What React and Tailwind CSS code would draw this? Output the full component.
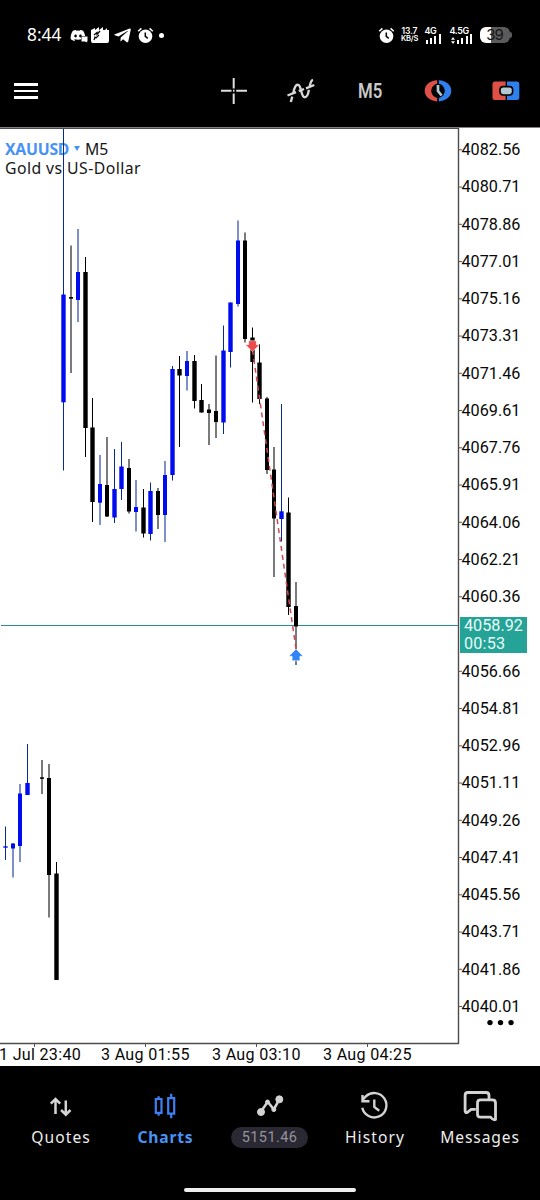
import React from 'react';
import { FaDiscord, FaTelegramPlane } from 'react-icons/fa';

// index, high, body top, body bottom, low, rising
const candles = [
  [0, 826.5, 846.3, 847.7, 860, 1], [1, 843, 843.5, 848.5, 877.5, 1], [2, 784, 793.5, 846, 862, 1], [3, 744, 783, 795, 795, 1],
  [5, 760, 777.3, 778.8, 794, 0], [6, 764, 778, 875, 917.5, 0], [7, 862, 873.5, 980, 980, 0],
  [8, 129, 294.5, 402.3, 470.5, 1], [9, 245.5, 297, 298.7, 373, 0], [10, 229, 272, 300, 322, 1],
  [11, 257, 272, 428, 457, 0], [12, 398, 427.5, 502, 522, 0], [13, 455, 484, 502.7, 525, 1],
  [14, 437, 485, 516.5, 517, 0], [15, 449, 489, 517.5, 523, 1], [16, 442, 466.5, 489, 500, 1],
  [17, 459, 468, 511.5, 513.5, 0], [18, 480, 507, 512, 531.5, 1], [19, 489, 507.5, 533.5, 537.5, 0],
  [20, 482.5, 491, 534, 540.5, 1], [21, 488, 491, 515, 529, 0], [22, 461, 475, 515, 542, 1],
  [23, 366, 369, 475, 480.5, 1], [24, 356, 369, 375.5, 447, 0], [25, 351, 361, 376, 390.5, 1],
  [26, 355, 361, 401, 408.5, 0], [27, 384, 400, 412.5, 412.5, 0], [28, 404, 409.5, 413, 445, 0],
  [29, 355.5, 411, 422, 438, 0], [30, 325.5, 350.5, 422.5, 434, 1], [31, 302.5, 302.5, 352, 367.5, 1],
  [32, 220.5, 240.5, 304, 306.5, 1], [33, 232.5, 240.5, 339, 342.5, 0], [34, 327.5, 337.5, 362, 402.5, 0],
  [35, 344, 362.5, 399, 404, 0], [36, 397, 398.5, 470, 474, 0], [37, 447, 469.5, 518.5, 577, 0],
  [38, 404, 511.3, 519, 541.5, 1], [39, 497.5, 512.5, 607, 615, 0], [40, 582, 606, 626.5, 665, 0],
];

const prices = [
  '4082.56', '4080.71', '4078.86', '4077.01', '4075.16', '4073.31', '4071.46', '4069.61', '4067.76', '4065.91', '4064.06', '4062.21',
  '4060.36', '', '4056.66', '4054.81', '4052.96', '4051.11', '4049.26', '4047.41', '4045.56', '4043.71', '4041.86', '4040.01',
];

// candles whose wick straddles two pixel columns
const soft = [1, 2, 5, 6, 9, 10, 13, 14, 17, 18, 21, 22, 25, 28, 29, 32, 33, 36, 37, 40];

function Candle({ data }) {
  const [i, high, top, bottom, low, up] = data;
  const x = 5.6 + i * 7.262;
  const split = soft.includes(i);
  const cx = split ? Math.round(x) : Math.floor(x) + 0.5;
  const half = split ? 2 : 2.2;
  return (
    <g>
      <rect x={split ? cx - 1 : cx - 0.5} y={high} width={split ? 2 : 1} height={low - high}
        fill={up ? '#082a8f' : '#000'} opacity={split ? 0.52 : 1} />
      <rect x={cx - half} y={top} width={half * 2} height={bottom - top} fill={up ? '#000cf0' : '#000'} />
    </g>
  );
}

function Alarm() {
  return (
    <svg className="h-[17px] w-[17px]" viewBox="0 0 17 17" fill="none">
      <circle cx="8.5" cy="9.3" r="6.8" fill="#fff" />
      <path d="M1.2 4.3 4.4 1.4M15.8 4.3l-3.2-2.9" stroke="#fff" strokeWidth="1.5" />
      <path d="M8.3 5.6v3.8l2.5 1.9" stroke="#000" strokeWidth="1.5" />
    </svg>
  );
}

function Bars({ label, arrows }) {
  return (
    <div className="flex flex-col items-start">
      <span className="h-[9px] text-[9px] leading-[8px] font-semibold tracking-[-0.4px] whitespace-nowrap">{label}</span>
      <div className="-mt-[2px] flex h-[10px] items-end gap-[2.4px] pl-px">
        {arrows && <svg className="h-[7px] w-1" viewBox="0 0 4 7"><path d="m2 0 2 2.7H0ZM2 7 0 4.3h4Z" fill="#fff" /></svg>}
        <i className="h-1 w-[2px] bg-white" /><i className="h-[6px] w-[2px] bg-white" />
        <i className="h-2 w-[2px] bg-white" /><i className="h-[10px] w-[2px] bg-white" />
      </div>
    </div>
  );
}

function StatusBar() {
  return (
    <div className="flex h-[70px] items-center pl-[27px] font-[Inter,sans-serif] text-white">
      <span className="w-[43px] font-['Noto_Sans',sans-serif] text-[17.3px] leading-5">8:44</span>
      <FaDiscord className="h-[17px] w-[16px]" />
      <svg className="-ml-[5px] mt-[9px] h-[7px] w-[7px]" viewBox="0 0 7 7"><path d="M0 0h7v5l-1 2-2-1H0Z" fill="#fff" stroke="#000" /></svg>
      <svg className="ml-[3px] h-[16px] w-[18px]" viewBox="0 0 18 16">
        <path d="M0 3l4-2v2l4-3v3l4-3v3h2l2-2v2h2v11q0 2-2 2H2q-2 0-2-2Z" fill="#fff" />
        <path d="m3 8 3-2.5v2L9 4M3 13l1-3 1 1 3-3" fill="none" stroke="#000" strokeWidth="1.2" />
      </svg>
      <FaTelegramPlane className="ml-[5px] h-[19px] w-[17px]" />
      <span className="ml-[6px]"><Alarm /></span>
      <i className="ml-[5px] h-[5px] w-[5px] rounded-full bg-white" />
      <div className="ml-[213.5px]"><Alarm /></div>
      <div className="ml-[5px] w-5 text-center text-[8.5px] leading-[8.5px] font-semibold whitespace-nowrap">
        <div className="tracking-[-0.1px]">13.7</div><div className="text-[7.5px] tracking-[-0.2px]">KB/S</div>
      </div>
      <div className="ml-[5px] w-[20px]"><Bars label="4G" /></div>
      <div className="ml-[5px] w-[21px]"><Bars label="4.5G" arrows /></div>
      <div className="ml-[9px] flex items-center">
        <div className="flex h-4 w-[30px] items-center justify-center rounded-[6px] bg-linear-to-r from-white from-38% to-[#5b5b5b] to-38% text-[15px] leading-4 tracking-[-1px] text-[#151515]">39</div>
        <i className="h-[6px] w-[2px] rounded-r bg-[#5b5b5b]" />
      </div>
    </div>
  );
}

function Toolbar() {
  return (
    <div className="flex h-[57px] items-start pt-[5px] pl-[14px]">
      <div className="flex h-8 w-6 flex-col justify-center gap-[4px]">
        <i className="h-[2.5px] bg-white" /><i className="h-[2.5px] bg-white" /><i className="h-[2.5px] bg-white" />
      </div>
      <svg className="ml-[182px] h-8 w-7" viewBox="0 0 28 32" fill="none" stroke="#dedede" strokeWidth="2">
        <path d="M13.7 3v10.5M13.7 18.5V29M1 15.8h10.5M16.2 15.8H27M13 15.8h1.5" />
      </svg>
      <svg className="ml-[39px] h-8 w-7" viewBox="0 0 28 32" fill="none" stroke="#d8d8d8" strokeWidth="2.4">
        <path d="M.5 20.5 9 17.2M11.8 16.1 17 14M19 13.3 27.3 10" />
        <path d="M3.8 27 5.3 21.7M6.2 18.4C7.2 13 8.6 9.8 10.6 9.8c4.6 0 2.6 12.4 7.3 12.4 2.6 0 3.4-3.8 4-7.3M22.8 11.3C23.4 7.4 24.3 5.3 26 4.8" />
      </svg>
      <span className="ml-[42.5px] w-[25.5px]">
        <span className="block origin-left scale-x-[.86] font-[Roboto,sans-serif] text-[19.5px] leading-[33px] font-semibold text-[#c9c9c9]">M5</span>
      </span>
      <svg className="ml-[40.5px] h-8 w-7" viewBox="0 0 28 32" fill="none">
        <path d="M13.2 5.2v3.5a7.2 7.2 0 0 0 0 14.2v3.5C5.8 25.8.7 21.5.7 15.8S5.8 5.7 13.2 5.2Z" fill="#df5147" />
        <path d="M14.8 5.2v3.5a7.2 7.2 0 0 1 0 14.2v3.5c7.4-.6 12.5-4.9 12.5-10.6S22.2 5.7 14.8 5.2Z" fill="#2f80ed" />
        <path d="M14 10v6l3.6 4.5" stroke="#b4c8d2" strokeWidth="2.7" />
      </svg>
      <svg className="ml-[40px] h-8 w-7" viewBox="0 0 28 32">
        <path d="M.5 9q0-2.5 2.5-2.5h10.8V25H3Q.5 25 .5 22.5Z" fill="#df5147" />
        <path d="M14.8 6.5h10q2.5 0 2.5 2.5v13.5q0 2.5-2.5 2.5h-10Z" fill="#2f80ed" />
        <path d="M14.3 6v20" stroke="#000" />
        <rect x="8" y="11.6" width="12.6" height="8.4" rx="3.2" fill="#b4c8d2" stroke="#000" strokeWidth="1.6" />
      </svg>
    </div>
  );
}

function Chart() {
  return (
    <main className="relative flex h-[939px] flex-col overflow-hidden bg-white">
      <div className="flex h-[917px]">
        <div className="w-[459px] pt-[12px] pl-[5px] font-['Noto_Sans',sans-serif] text-[15.8px] leading-[20px] text-[#161616]">
          <div className="flex h-[19.4px] items-center">
            <span className="w-[64px] font-bold tracking-[-0.25px] text-[#4793f5]">XAUUSD</span>
            <svg className="ml-[5px] h-[5px] w-[6px]" viewBox="0 0 6 5"><path d="M0 0h6L3 5Z" fill="#4793f5" /></svg>
            <span className="ml-[5px]">M5</span>
          </div>
          <div className="text-[15.8px] tracking-[0.43px] whitespace-nowrap">Gold vs US-Dollar</div>
        </div>
        <div className="relative pt-[4.5px] pl-[2.5px] font-[Roboto,sans-serif] text-[16.2px] text-[#080808]">
          {prices.map((p, i) => <div key={i} className="flex h-[37.26px] items-center leading-5">{p}</div>)}
          <div className="absolute top-[490px] left-px flex h-[36px] w-[67px] flex-col bg-[#24a396] pl-[4px] text-[16.2px] leading-[18px] text-[#e9fbf9]">
            <span>4058.92</span><span className="tracking-[0.2px]">00:53</span>
          </div>
        </div>
      </div>
      <div className="flex h-[22px] font-[Roboto,sans-serif] text-[16.1px] leading-[21px] tracking-[0.3px] whitespace-nowrap text-[#080808]">
        <span className="-ml-[1px] w-[102px]">1 Jul 23:40</span><span className="w-[111px]">3 Aug 01:55</span>
        <span className="w-[111px]">3 Aug 03:10</span><span>3 Aug 04:25</span>
      </div>
      <svg className="absolute inset-0 h-[939px] w-[540px]" viewBox="0 127 540 939">
        <path d="M0 127.5h540" stroke="#867f82" />
        <path d="M0 128.5h459" stroke="#4b494a" />
        <path d="M458.5 128v916M0 1043.5h459" stroke="#4d4d4d" strokeWidth="1.4" />
        {prices.map((p, i) => p && <path key={i} d={`M459 ${149.8 + i * 37.25}h3`} stroke="#555" />)}
        {[34.5, 145.5, 256.5, 367.5].map((x) => <path key={x} d={`M${x} 1044v3`} stroke="#555" />)}
        <rect x="1" y="625" width="457" height="1" fill="#2a8f8d" />
        {candles.map((c) => <Candle key={c[0]} data={c} />)}
        <path d="M252.5 350 296 649" fill="none" stroke="#cd4a50" strokeWidth="1.5" strokeDasharray="5 4" />
        <path d="M248.7 340.7h7.6v4h3.2l-7 7-7-7h3.2Z" fill="#ec4b4b" stroke="#fff" strokeWidth=".5" />
        <path d="m296 649 7.2 7.3h-3.3v4.5h-7.8v-4.5h-3.3Z" fill="#3185f6" stroke="#fff" strokeWidth=".6" />
        <g fill="#000"><circle cx="490" cy="1022.6" r="2.7" /><circle cx="500.5" cy="1022.6" r="2.7" /><circle cx="511" cy="1022.6" r="2.7" /></g>
      </svg>
    </main>
  );
}

function Navigation() {
  return (
    <nav className="h-[134px] bg-black font-['Noto_Sans',sans-serif] text-[15.6px] leading-5 tracking-[1.1px] text-[#eee]">
      <div className="flex h-[118px] pt-[21px] pl-[8px]">
        <div className="flex w-[105px] flex-col items-center gap-[3px]">
          <svg className="h-[37px] w-9" viewBox="0 0 36 37" fill="none" stroke="#d5d5d5" strokeWidth="2.5">
            <path d="M12.5 27V12M7.8 16.7l4.7-4.7 4.7 4.7M22.8 13.5v14M18.1 23l4.7 4.7 4.7-4.7" />
          </svg>
          <span className="-mr-px">Quotes</span>
        </div>
        <div className="flex w-[104px] flex-col items-center gap-[3px] text-[#4793f5]">
          <svg className="h-[37px] w-9" viewBox="0 0 36 37" fill="none" stroke="#3e7ff5" strokeWidth="2.2">
            <path d="M8.8 12h5.7v13.8H8.8ZM11.6 9.2V12M11.6 25.8v3M21.2 11.2h6v15.5h-6ZM24.2 6.7v4.5M24.2 26.7v4.5" />
          </svg>
          <span className="-mr-px font-bold tracking-[0.8px]">Charts</span>
        </div>
        <div className="flex w-[105px] flex-col items-center gap-[3px]">
          <svg className="h-[37px] w-9" viewBox="0 0 36 37" stroke="#d3d3d3" fill="#d3d3d3">
            <path d="m9 24.5 6.7-9.7 6.1 7.6 5.5-10" strokeWidth="2.6" fill="none" />
            <circle cx="9" cy="25" r="3.5" /><circle cx="15.5" cy="15" r="2" /><circle cx="21.8" cy="22.6" r="2" /><circle cx="27.3" cy="12.3" r="3.5" />
          </svg>
          <span className="h-[21px] w-[77px] rounded-full bg-[#292833] text-center font-[Roboto,sans-serif] text-[14.5px] leading-[21px] tracking-[0.4px] text-[#95939b]">5151.46</span>
        </div>
        <div className="flex w-[105px] flex-col items-center gap-[3px]">
          <svg className="h-[37px] w-9" viewBox="0 0 36 37" fill="none" stroke="#d3d3d3" strokeWidth="2.4">
            <path d="M5.3 20.8A12.2 12.2 0 1 0 8.8 9.4L5.5 13M5.5 8v6.2h7M17.3 12.5V20l4.9 3.7" />
          </svg>
          <span className="-mr-px">History</span>
        </div>
        <div className="flex w-[105px] flex-col items-center gap-[3px]">
          <svg className="h-[37px] w-9" viewBox="0 0 36 37" fill="none" stroke="#d3d3d3" strokeWidth="2.8">
            <path d="M5.7 5.5H24q3 0 3 3V12M13.8 22.4H9.2l-3.8 3q-2.3 1-2.3-1.8V8.5q0-3 2.6-3M18.5 12.8h12q3 0 3 3v16.7q-1.8 1.4-5-2.3h-10q-3 0-3-3V15.8q0-3 3-3Z" />
          </svg>
          <span className="-mr-px tracking-[0.9px]">Messages</span>
        </div>
      </div>
      <div className="flex justify-center pt-[4px]"><i className="h-1 w-[172px] rounded-full bg-[#eee]" /></div>
    </nav>
  );
}

export default function App() {
  return (
    <div className="flex h-[1200px] w-[540px] flex-col overflow-hidden bg-black">
      <StatusBar /><Toolbar /><Chart /><Navigation />
    </div>
  );
}
